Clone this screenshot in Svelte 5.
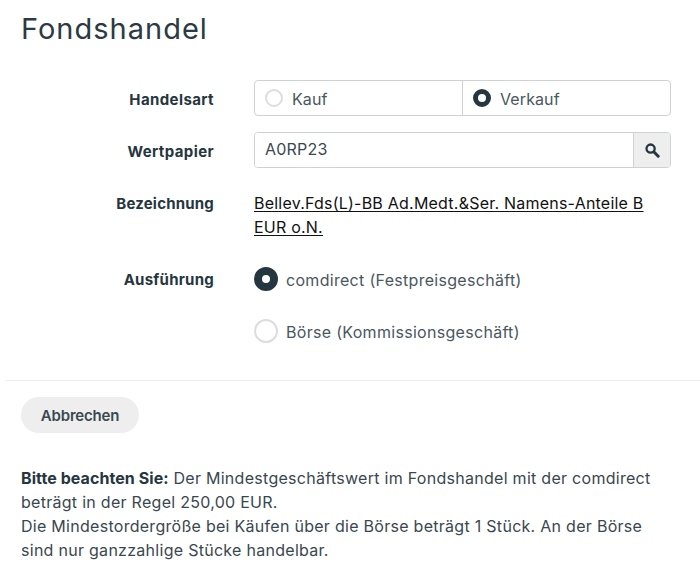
<script>
  let art = $state('verkauf')
  let venue = $state('comdirect')
  let wkn = $state('A0RP23')
</script>

<div class="page">
  <h1>Fondshandel</h1>

  <div class="form">
    <div class="row">
      <div class="label">Handelsart</div>
      <div class="field seg">
        <button class="seg-item" onclick={() => (art = 'kauf')}>
          <span class="radio small" class:on={art === 'kauf'}></span><span class="txt">Kauf</span>
        </button>
        <button class="seg-item" onclick={() => (art = 'verkauf')}>
          <span class="radio small" class:on={art === 'verkauf'}></span><span class="txt">Verkauf</span>
        </button>
      </div>
    </div>

    <div class="row">
      <div class="label">Wertpapier</div>
      <div class="field search">
        <input bind:value={wkn} />
        <button class="search-btn" aria-label="Suchen">
          <svg width="15" height="15" viewBox="0 0 15 15">
            <circle cx="5.6" cy="5.6" r="4.1" fill="none" stroke="#263640" stroke-width="2.3" />
            <path d="M9 9L13.2 13.2" stroke="#263640" stroke-width="3" stroke-linecap="round" />
          </svg>
        </button>
      </div>
    </div>

    <div class="row text-row">
      <div class="label">Bezeichnung</div>
      <div class="field name"><span class="link">Bellev.Fds(L)-BB Ad.Medt.&amp;Ser. Namens-Anteile B EUR o.N.</span></div>
    </div>

    <div class="row venue-row">
      <div class="label">Ausführung</div>
      <div class="field venues">
        <button class="venue" onclick={() => (venue = 'comdirect')}>
          <span class="radio" class:on={venue === 'comdirect'}></span><span class="txt">comdirect (Festpreisgeschäft)</span>
        </button>
        <button class="venue" onclick={() => (venue = 'boerse')}>
          <span class="radio" class:on={venue === 'boerse'}></span><span class="txt">Börse (Kommissionsgeschäft)</span>
        </button>
      </div>
    </div>
  </div>

  <div class="actions">
    <button class="cancel">Abbrechen</button>
  </div>

  <div class="note">
    <p><strong>Bitte beachten Sie:</strong> Der Mindestgeschäftswert im Fondshandel mit der comdirect beträgt in der Regel 250,00 EUR.</p>
    <p>Die Mindestordergröße bei Käufen über die Börse beträgt 1 Stück. An der Börse sind nur ganzzahlige Stücke handelbar.</p>
  </div>
</div>

<style>
:global(body) { margin: 0; background: #fff; }
.page {
  width: 700px; height: 565px; overflow: hidden; box-sizing: border-box;
  font-family: "Inter", "Liberation Sans", sans-serif; font-size: 16px; color: #263640;
}
h1 {
  margin: 0; padding: 10px 0 0 21px; height: 69px; box-sizing: border-box;
  font-size: 29px; line-height: 38px; font-weight: 400; letter-spacing: 1px; color: #2b3a44;
}
.form { display: flex; flex-direction: column; }
.row { display: flex; align-items: center; height: 36px; margin-bottom: 16px; }
.row:first-child { margin-top: 11px; }
.label {
  width: 214px; flex: 0 0 214px; box-sizing: border-box; padding-top: 2px;
  text-align: right; font-weight: 700; font-size: 15px; letter-spacing: 0.4px;
}
.field { margin-left: 40px; width: 417px; box-sizing: border-box; }
.seg {
  display: flex; height: 36px; border: 1px solid #cfd2d4; border-radius: 4px;
}
.seg-item {
  flex: 1; display: flex; align-items: center; gap: 9px; padding: 0 0 0 10px;
  background: none; border: 0; font: inherit; color: #4a5760; letter-spacing: 0.1px;
}
.seg-item .txt { padding-top: 2px; }
.venue .txt { padding-top: 1px; }
.seg-item + .seg-item { border-left: 1px solid #cfd2d4; }
.radio {
  width: 24px; height: 24px; border-radius: 50%; box-sizing: border-box; flex: 0 0 auto;
  border: 2px solid #dcdddd; background: #fff;
}
.radio.small { width: 18px; height: 18px; }
.radio.on { border: 8px solid #263640; }
.radio.small.on { border-width: 5.5px; }
.search {
  display: flex; height: 36px; border: 1px solid #cfd2d4; border-radius: 4px; overflow: hidden;
}
input {
  flex: 1; min-width: 0; border: 0; outline: 0; padding: 0 0 2px 10px;
  font: inherit; color: #3a4852; letter-spacing: 0.2px;
}
.search-btn {
  width: 37px; border: 0; border-left: 1px solid #cfd2d4; background: #eeeeee; padding: 0;
  display: flex; align-items: center; justify-content: center;
}
.text-row { height: 48px; align-items: flex-start; margin-top: 7px; margin-bottom: 28px; }
.text-row .label { line-height: 24px; padding-top: 1px; letter-spacing: 0.2px; }
.name { line-height: 24px; color: #111; letter-spacing: 0.22px; }
.link { text-decoration: underline; text-underline-offset: 2px; }
.venue-row { height: auto; align-items: flex-start; margin-bottom: 0; }
.venue-row .label { line-height: 24px; padding-top: 1px; letter-spacing: 0.25px; }
.venues { display: flex; flex-direction: column; gap: 28px; }
.venue {
  display: flex; align-items: center; gap: 8px; height: 24px; padding: 0;
  background: none; border: 0; font: inherit; color: #4a5760; letter-spacing: 0.3px;
}
.actions {
  margin: 37px 0 0 5px; padding: 16px 0 0 16px; border-top: 1px solid #eeeeee;
}
.cancel {
  height: 36px; width: 118px; border: 0; border-radius: 18px; background: #eeeeee;
  font: inherit; font-size: 15px; font-weight: 600; color: #3a4852; letter-spacing: -0.2px;
}
.note { margin: 33px 0 0 21px; width: 640px; line-height: 24px; color: #39474f; letter-spacing: 0.28px; }
.note p { margin: 0; }
.note strong { font-weight: 700; color: #263640; letter-spacing: 0.07px; }
</style>
